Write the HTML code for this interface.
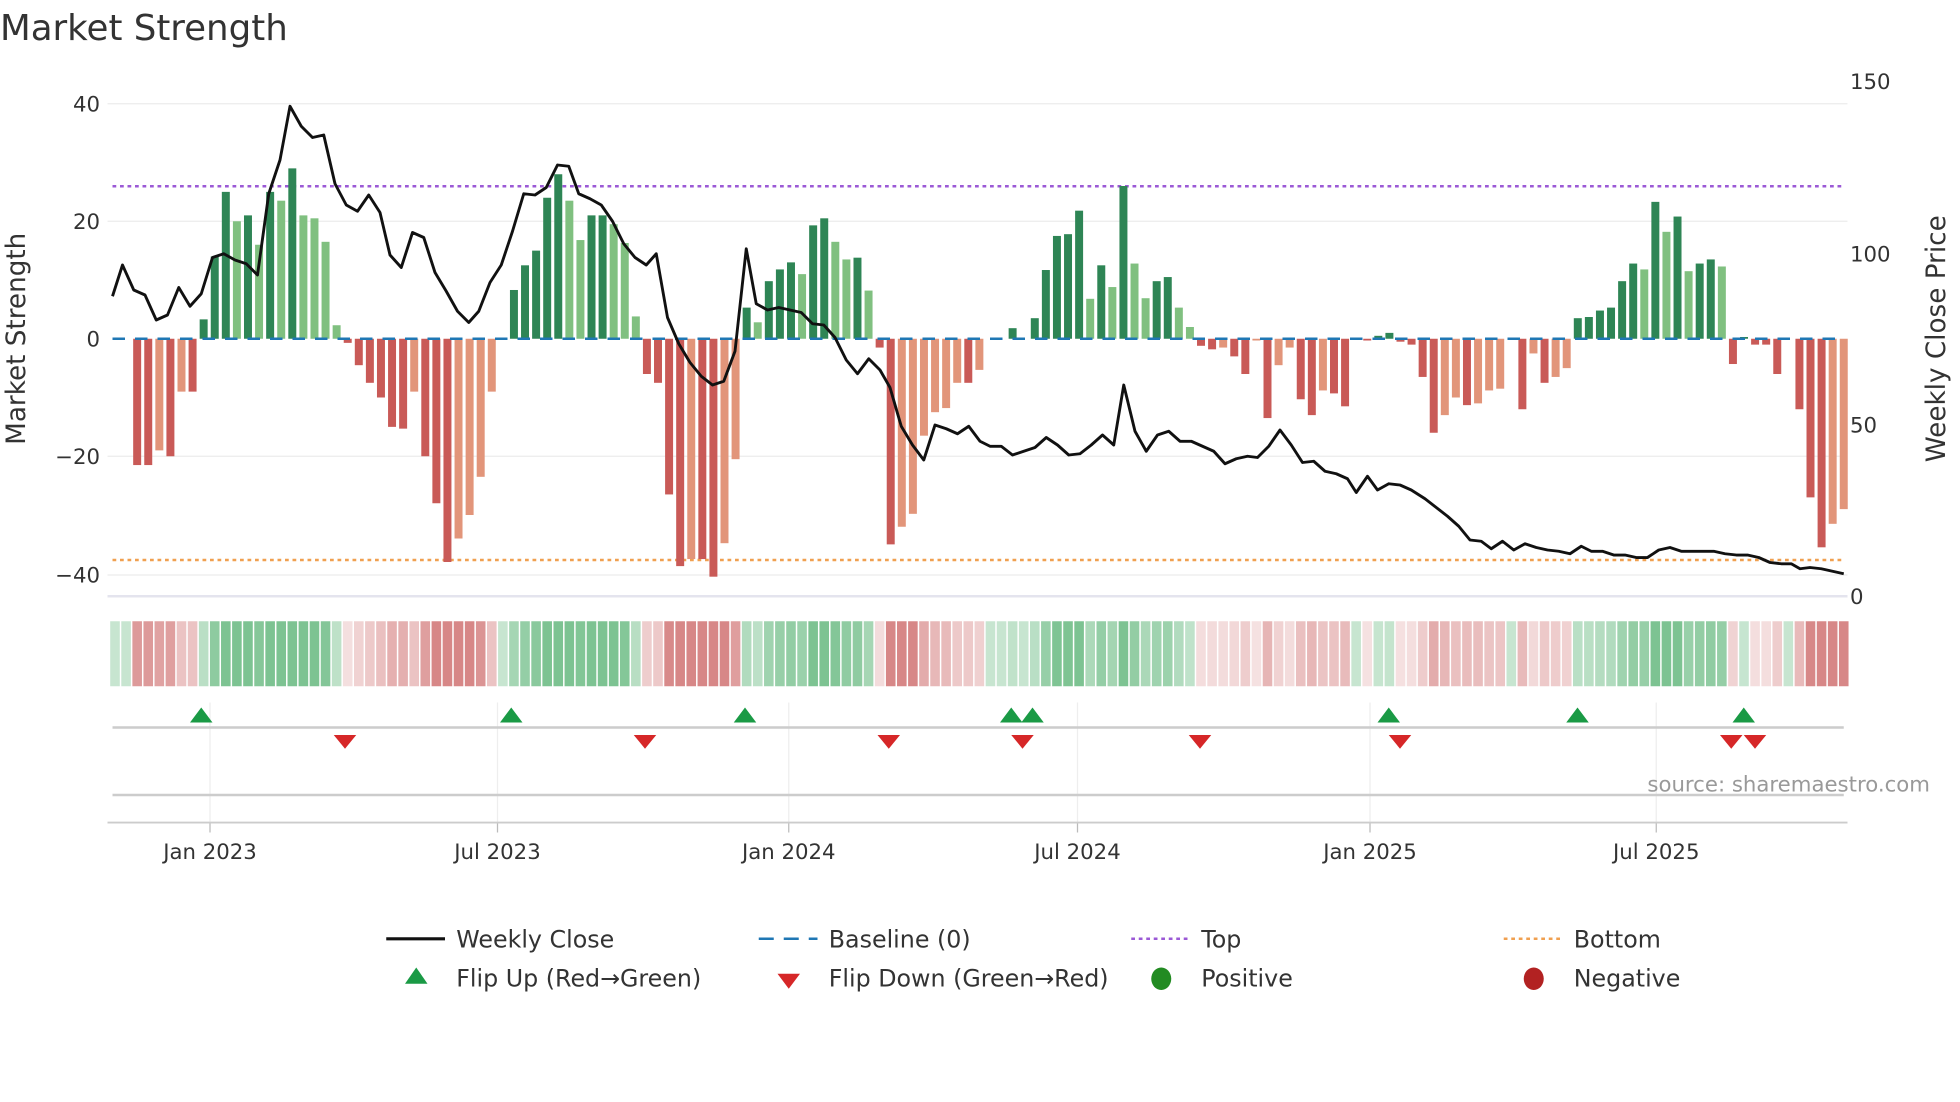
<!DOCTYPE html>
<html><head><meta charset="utf-8"><style>
html,body{margin:0;padding:0;background:#fff}
svg{display:block}
text{font-family:"DejaVu Sans","Liberation Sans",sans-serif;fill:#333}
</style></head><body>
<svg id="s" width="1960" height="1102" viewBox="0 0 1568 881.6" preserveAspectRatio="none" xmlns="http://www.w3.org/2000/svg">
<text x="0" y="32" font-size="28.5" fill="#333">Market Strength</text>
<g id="grid"></g>
<g id="bars"></g>
<g id="strip"></g>
<g id="line"></g>
<g id="mk"></g>
<text x="20" y="271" font-size="21" text-anchor="middle" transform="rotate(-90 20 271)">Market Strength</text>
<text x="1556" y="271" font-size="21" text-anchor="middle" transform="rotate(-90 1556 271)">Weekly Close Price</text>
<g font-size="17" text-anchor="end">
<text x="80" y="89">40</text><text x="80" y="183">20</text><text x="80" y="277">0</text><text x="80" y="371">−20</text><text x="80" y="466">−40</text>
</g>
<g font-size="17">
<text x="1480" y="71">150</text><text x="1480" y="209">100</text><text x="1480" y="346">50</text><text x="1480" y="483">0</text>
</g>
<g font-size="17" text-anchor="middle">
<text x="168" y="687">Jan 2023</text><text x="398" y="687">Jul 2023</text><text x="631" y="687">Jan 2024</text><text x="862" y="687">Jul 2024</text><text x="1096" y="687">Jan 2025</text><text x="1325" y="687">Jul 2025</text>
</g>
<text x="1544" y="633" font-size="17" text-anchor="end" style="fill:#999">source: sharemaestro.com</text>
<g font-size="19">
<line x1="309" y1="751" x2="356" y2="751" stroke="#111" stroke-width="2.5"/><text x="365" y="758">Weekly Close</text>
<line x1="607" y1="751" x2="654" y2="751" stroke="#1f77b4" stroke-width="2" stroke-dasharray="12,8"/><text x="663" y="758">Baseline (0)</text>
<line x1="905" y1="751" x2="952" y2="751" stroke="#9b59d6" stroke-width="2" stroke-dasharray="3,3"/><text x="961" y="758">Top</text>
<line x1="1203" y1="751" x2="1250" y2="751" stroke="#f0a050" stroke-width="2" stroke-dasharray="3,3"/><text x="1259" y="758">Bottom</text>
<polygon points="333,774 324,787 342,787" fill="#1a9a45"/><text x="365" y="789">Flip Up (Red→Green)</text>
<polygon points="622,779 640,779 631,791" fill="#d62728"/><text x="663" y="789">Flip Down (Green→Red)</text>
<ellipse cx="929" cy="783" rx="8" ry="9" fill="#228b22"/><text x="961" y="789">Positive</text>
<ellipse cx="1227" cy="783" rx="8" ry="9" fill="#b22222"/><text x="1259" y="789">Negative</text>
</g>
</svg>
<script>
const NS="http://www.w3.org/2000/svg";
function el(p,t,a){const e=document.createElementNS(NS,t);for(const k in a)e.setAttribute(k,a[k]);document.getElementById(p).appendChild(e);return e;}
[83,177,365,460].forEach(y=>el('grid','line',{x1:86,x2:1478,y1:y,y2:y,stroke:'#ececec','stroke-width':1}));
el('grid','line',{x1:86,x2:1478,y1:477,y2:477,stroke:'#e4e4ee','stroke-width':2});
[168,398,631,862,1096,1325].forEach(x=>{el('grid','line',{x1:x,x2:x,y1:562,y2:658,stroke:'#eee'});el('grid','line',{x1:x,x2:x,y1:658,y2:666,stroke:'#bbb'});});
el('grid','line',{x1:90,x2:1475,y1:582,y2:582,stroke:'#ccc','stroke-width':2});
el('grid','line',{x1:90,x2:1475,y1:636,y2:636,stroke:'#ccc','stroke-width':2});
el('grid','line',{x1:86,x2:1478,y1:658,y2:658,stroke:'#ccc','stroke-width':1.5});
el('grid','line',{x1:90,x2:1475,y1:149,y2:149,stroke:'#9b59d6','stroke-width':2,'stroke-dasharray':'3,3'});
el('grid','line',{x1:90,x2:1475,y1:448,y2:448,stroke:'#f0a050','stroke-width':2,'stroke-dasharray':'3,3'});
const v=[0,0,-21.5,-21.5,-19,-20,-9,-9,3.3,14,25,20,21,16,25,23.5,29,21,20.5,16.5,2.3,-0.7,-4.5,-7.5,-10,-15,-15.3,-9,-20,-28,-38,-34,-30,-23.5,-9,0,8.3,12.5,15,24,28,23.5,16.8,21,21,19.5,16.3,3.8,-6,-7.5,-26.5,-38.7,-37.5,-37.5,-40.5,-34.8,-20.5,5.3,2.8,9.8,11.8,13,11,19.3,20.5,16.5,13.5,13.8,8.2,-1.5,-35,-32,-29.8,-16.5,-12.5,-11.8,-7.5,-7.5,-5.3,0,0,1.8,0,3.5,11.7,17.5,17.8,21.8,6.8,12.5,8.8,26,12.8,6.9,9.8,10.5,5.3,2,-1.2,-1.8,-1.5,-3,-6,-0.3,-13.5,-4.5,-1.5,-10.3,-13,-8.8,-9.3,-11.5,0,-0.3,0.5,1,-0.5,-1,-6.5,-16,-13,-10,-11.3,-11,-8.8,-8.5,0,-12,-2.5,-7.5,-6.5,-5,3.5,3.7,4.8,5.3,9.8,12.8,11.8,23.3,18.2,20.8,11.5,12.8,13.5,12.3,-4.3,0.3,-1,-1,-6,0,-12,-27,-35.5,-31.5,-29];
const n=v.length,x0=92,x1=1475,st=(x1-x0)/(n-1),bw=st*0.72;
for(let i=0;i<n;i++){const x=x0+i*st,val=v[i],p=i?v[i-1]:0;
 const dark=Math.abs(val)>=Math.abs(p)&&Math.sign(val)==Math.sign(p)||Math.sign(val)!=Math.sign(p);
 let c=val>=0?(dark?'#2e8555':'#80c080'):(dark?'#c95a57':'#e2957a');
 const h=Math.abs(val)*4.7,y=val>=0?271-h:271;
 if(h>0.3)el('bars','rect',{x:x-bw/2,y:y,width:bw,height:h,fill:c});
 let sc=val>=0?`rgba(70,170,100,${0.3+Math.min(0.4,val/45)})`:`rgba(200,90,90,${0.18+Math.min(0.55,-val/50)})`;
 el('strip','rect',{x:x-st/2+0.6,y:497,width:st-1.2,height:52,fill:sc});
}
el('bars','line',{x1:90,x2:1475,y1:271,y2:271,stroke:'#1f77b4','stroke-width':2,'stroke-dasharray':'10,8'});
const pts="90,237 98,212 107,232 116,236 125,256 134,252 143,230 152,245 161,235 170,206 179,203 188,208 197,211 206,220 215,155 224,128 232,85 241,101 250,110 259,108 268,147 277,164 286,169 295,156 304,170 312,204 321,214 330,186 339,190 348,218 357,233 366,249 375,258 383,249 392,226 401,212 410,185 419,155 428,156 437,150 446,132 455,133 463,155 472,159 481,164 490,177 499,195 508,206 517,212 525,203 534,254 543,275 552,290 561,301 570,308 579,305 588,281 597,199 605,243 614,248 623,246 632,248 641,250 650,259 659,260 668,270 677,288 686,299 695,287 704,296 712,310 721,341 730,356 739,368 748,340 757,343 766,347 775,341 784,353 792,357 801,357 810,364 819,361 828,358 837,350 846,356 855,364 864,363 873,356 882,348 891,356 899,308 908,345 917,361 926,348 935,345 944,353 953,353 962,357 971,361 980,371 989,367 998,365 1006,366 1015,357 1024,344 1033,356 1042,370 1051,369 1060,377 1069,379 1078,383 1085,394 1094,381 1102,392 1111,387 1120,388 1129,392 1140,399 1149,406 1158,413 1167,421 1176,432 1185,433 1193,439 1202,433 1211,440 1220,435 1229,438 1238,440 1247,441 1256,443 1265,437 1273,441 1282,441 1291,444 1300,444 1309,446 1318,446 1327,440 1336,438 1345,441 1353,441 1362,441 1371,441 1380,443 1389,444 1398,444 1407,446 1416,450 1425,451 1433,451 1440,455 1448,454 1457,455 1466,457 1475,459";
el('line','polyline',{points:pts,fill:'none',stroke:'#111','stroke-width':2.3,'stroke-linejoin':'round'});
[161,409,596,809,826,1111,1262,1395].forEach(x=>el('mk','polygon',{points:`${x},566 ${x-9},578 ${x+9},578`,fill:'#1a9a45'}));
[276,516,711,818,960,1120,1385,1404].forEach(x=>el('mk','polygon',{points:`${x-9},588 ${x+9},588 ${x},599`,fill:'#d62728'}));
</script>
</body></html>
